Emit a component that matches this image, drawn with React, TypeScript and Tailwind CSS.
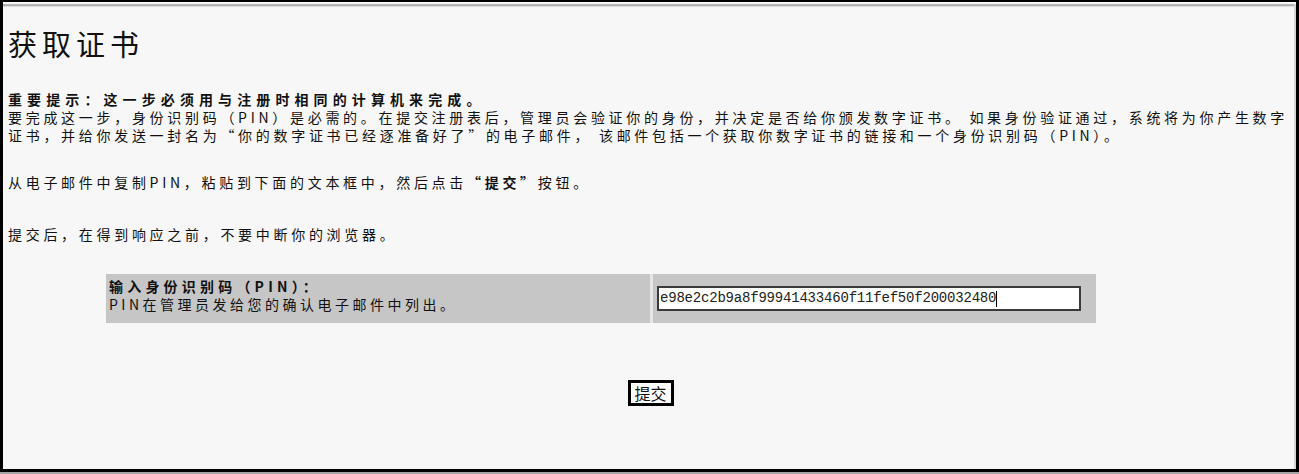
import React from "react";

export default function App() {
  const pin = "e98e2c2b9a8f99941433460f11fef50f200032480";
  return (
    <div className="w-[1299px] h-[474px] bg-[#a4a4a4] font-['Noto_Sans_CJK_SC',sans-serif] text-[#111]">
      <div className="h-[472px] bg-[#f7f7f7] border-l-[3px] border-t-2 border-r-[3px] border-b-[3px] border-black overflow-hidden">
        <div className="h-[467px] border-r-2 border-b-2 border-[#d4d4d4]">
          <div className="mt-[2px] h-[3px] bg-[#b4b4b4] border-b border-[#dcdcdc]" />
          <div className="pl-[5px]">
            <h1 className="mt-[20px] text-[29px] leading-[32px] tracking-[5px] font-normal">获取证书</h1>

            <div className="mt-[31px] text-[14px] leading-[18px] whitespace-nowrap">
              <div className="font-bold tracking-[5.1px]">重要提示：这一步必须用与注册时相同的计算机来完成。</div>
              <div className="tracking-[3.7px]">
                要完成这一步，身份识别码（PIN）是必需的。在提交注册表后，管理员会验证你的身份，并决定是否给你颁发数字证书。 如果身份验证通过，系统将为你产生数字
              </div>
              <div className="tracking-[3.7px]">
                证书，并给你发送一封名为“你的数字证书已经逐准备好了”的电子邮件， 该邮件包括一个获取你数字证书的链接和一个身份识别码（PIN）。
              </div>
            </div>

            <p className="mt-[29px] text-[14px] leading-[18px] tracking-[3.7px] whitespace-nowrap">
              从电子邮件中复制PIN，粘贴到下面的文本框中，然后点击<span className="font-bold">“提交”</span>按钮。
            </p>

            <p className="mt-[34px] text-[14px] leading-[18px] tracking-[3.7px] whitespace-nowrap">
              提交后，在得到响应之前，不要中断你的浏览器。
            </p>
          </div>

          <div className="mt-[31px] ml-[103px] w-[990px] h-[49px] flex gap-[3px] bg-[#e6e6e6]">
            <div className="w-[544px] bg-[#c6c6c6] pl-[3px] pt-[3px] text-[14px] leading-[18px] whitespace-nowrap">
              <div className="font-bold tracking-[4.2px]">输入身份识别码（PIN）：</div>
              <div className="tracking-[3.5px]">PIN在管理员发给您的确认电子邮件中列出。</div>
            </div>
            <div className="flex-1 bg-[#c6c6c6] flex items-center pl-[4px]">
              <div className="w-[424px] h-[25px] bg-white border-2 border-[#3a3a3a] flex items-center pl-[1px] font-['Liberation_Mono',monospace] text-[14px] tracking-[-0.2px] text-[#222] whitespace-nowrap">
                <span>{pin}</span>
                <span className="w-px h-[16px] bg-black" />
              </div>
            </div>
          </div>

          <div className="mt-[57px] flex justify-center pl-[4px]">
            <div className="w-[46px] h-[26px] border-[3px] border-black bg-white flex items-center justify-center text-[16px] leading-none">
              提交
            </div>
          </div>
        </div>
      </div>
    </div>
  );
}
